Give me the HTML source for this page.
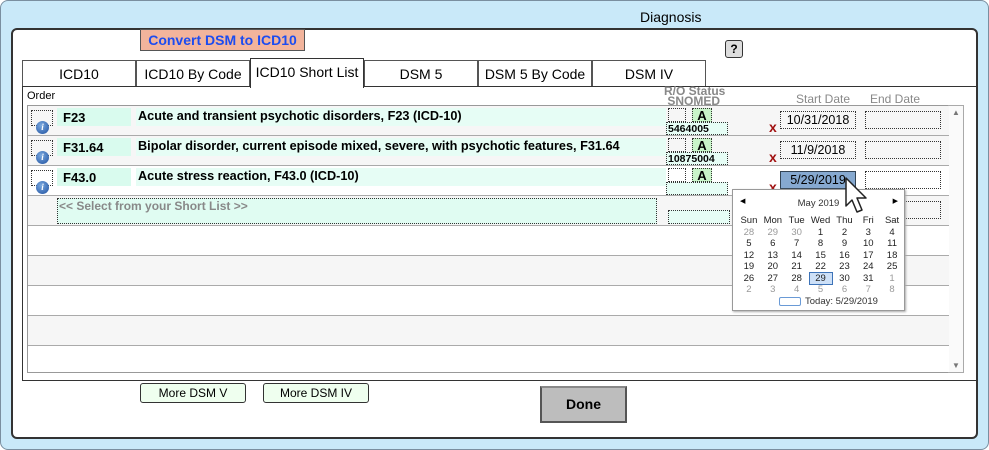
<!DOCTYPE html>
<html><head><meta charset="utf-8"><style>
*{box-sizing:border-box;margin:0;padding:0}
body{width:989px;height:450px;overflow:hidden;background:#fff;font-family:"Liberation Sans",Arial,sans-serif;position:relative}
.a{position:absolute}
.dot{border:1px dotted #333}
.row{position:absolute;left:28px;width:921px;height:30px;border-bottom:1px solid #aaa}
.code{position:absolute;left:29px;top:2px;width:74px;height:18px;background:#d9fbee;font-weight:bold;font-size:13px;padding:2px 6px}
.desc{position:absolute;left:108px;top:2px;width:530px;height:18px;background:#e6fdf5;font-weight:bold;font-size:12.7px;padding:1px 2px;white-space:nowrap}
.ord{position:absolute;left:3px;top:4px;width:22px;height:16px}
.info{position:absolute;left:8px;top:15px;width:13px;height:13px;border-radius:50%;background:radial-gradient(circle at 40% 35%,#7aa9e0,#1d4f9e);color:#fff;font:bold italic 9px "Liberation Serif",serif;text-align:center;line-height:13px}
.ro{position:absolute;left:640px;top:2px;width:18px;height:14px}
.st{position:absolute;left:664px;top:2px;width:20px;height:14px;background:#c9f5c9;font-weight:bold;font-size:13px;text-align:center;line-height:14px}
.sn{position:absolute;left:638px;top:16px;width:62px;height:13px;background:#e6fdf5;font-size:10.5px;font-weight:bold;line-height:12px;padding-left:1px}
.x{position:absolute;left:741px;top:13px;color:#a01010;font-weight:bold;font-size:14px}
.sd{position:absolute;left:752px;top:5px;width:76px;height:18px;font-size:12.5px;text-align:center;line-height:16px}
.ed{position:absolute;left:837px;top:5px;width:76px;height:18px}
.tab{position:absolute;top:60px;height:27px;border:1px solid #555;border-bottom:none;font-size:14px;text-align:center;line-height:27px;background:#fff}
.cal td{width:24px;text-align:center;font-size:9.5px;height:11.5px;line-height:11.5px;color:#222}
.cal .g{color:#999}
</style></head><body>
<div class="a" style="left:0;top:0;width:989px;height:450px;background:#c9e9f9;border:1px solid #7a8fa0;border-radius:8px"></div>
<div class="a" style="left:640px;top:9px;font-size:14px">Diagnosis</div>
<div class="a" style="left:11px;top:28px;width:967px;height:411px;background:#fff;border:2px solid #333;border-radius:6px"></div>
<div class="a" style="left:140px;top:29px;width:165px;height:22px;background:#f2b49c;border:1px solid #555;color:#1c4cf0;font-weight:bold;font-size:14px;text-align:center;line-height:20px">Convert DSM to ICD10</div>
<div class="a" style="left:725px;top:40px;width:18px;height:18px;border:1px solid #333;border-radius:3px;background:#ddd;font-weight:bold;font-size:12px;text-align:center;line-height:16px">?</div>
<div class="tab" style="left:22px;width:114px">ICD10</div>
<div class="tab" style="left:136px;width:114px">ICD10 By Code</div>
<div class="tab" style="left:250px;width:114px;top:58px;height:30px;z-index:2;border-color:#333">ICD10 Short List</div>
<div class="tab" style="left:364px;width:114px">DSM 5</div>
<div class="tab" style="left:478px;width:114px">DSM 5 By Code</div>
<div class="tab" style="left:592px;width:114px">DSM IV</div>
<div class="a" style="left:22px;top:86px;width:955px;height:295px;border-top:1px solid #333;border-left:1px solid #333;border-bottom:1px solid #333"></div>
<div class="a" style="left:27px;top:90px;font-size:11px">Order</div>
<div class="a" style="left:664px;top:86px;font-size:12px;font-weight:bold;color:#888;line-height:10px">R/O&nbsp;Status<br>&nbsp;SNOMED</div>
<div class="a" style="left:796px;top:92px;font-size:12px;color:#888">Start Date</div>
<div class="a" style="left:870px;top:92px;font-size:12px;color:#888">End Date</div>
<div class="a" style="left:27px;top:105px;width:937px;height:268px;border:1px solid #999;background:#fff"></div>
<div class="a" style="left:948px;top:105px;width:16px;height:268px;border:1px solid #aaa;background:#fafafa"><div style="font-size:8px;color:#777;text-align:center;margin-top:2px">▲</div><div style="font-size:8px;color:#777;text-align:center;position:absolute;bottom:2px;width:14px">▼</div></div>

<div class="row" style="top:106px;background:#f6f6f6">
<div class="ord dot"></div><div class="info">i</div><div class="code">F23</div><div class="desc">Acute and transient psychotic disorders, F23 (ICD-10)</div>
<div class="ro dot"></div><div class="st dot">A</div><div class="sn dot">5464005</div><div class="x">x</div><div class="sd dot">10/31/2018</div><div class="ed dot"></div></div>
<div class="row" style="top:136px;background:#f6f6f6">
<div class="ord dot"></div><div class="info">i</div><div class="code">F31.64</div><div class="desc">Bipolar disorder, current episode mixed, severe, with psychotic features, F31.64</div>
<div class="ro dot"></div><div class="st dot">A</div><div class="sn dot">10875004</div><div class="x">x</div><div class="sd dot">11/9/2018</div><div class="ed dot"></div></div>
<div class="row" style="top:166px;background:#fff">
<div class="ord dot"></div><div class="info">i</div><div class="code">F43.0</div><div class="desc">Acute stress reaction, F43.0 (ICD-10)</div>
<div class="ro dot"></div><div class="st dot">A</div><div class="sn dot"></div><div class="x">x</div><div class="sd" style="background:#86a9d0;border:1px solid #345">5/29/2019</div><div class="ed dot"></div></div>
<div class="row" style="top:196px;background:#f6f6f6">
<div class="a dot" style="left:29px;top:2px;width:600px;height:26px;background:#e0fcf2;color:#888;font-weight:bold;font-size:12px;padding-left:1px">&lt;&lt; Select from your Short List &gt;&gt;</div>
<div class="a dot" style="left:640px;top:14px;width:62px;height:14px;background:#e6fdf5"></div><div class="ed dot"></div></div>
<div class="row" style="top:226px;background:#fff"></div>
<div class="row" style="top:256px;background:#f6f6f6"></div>
<div class="row" style="top:286px;background:#fff"></div>
<div class="row" style="top:316px;background:#f6f6f6"></div>
<div class="row" style="top:346px;background:#fff;border-bottom:none;height:26px"></div>

<div class="a" style="left:732px;top:189px;width:173px;height:122px;background:#fff;border:1px solid #999;box-shadow:1px 1px 2px #aaa">
<div class="a" style="left:7px;top:7px;font-size:7px">◀</div><div class="a" style="right:6px;top:7px;font-size:7px">▶</div>
<div class="a" style="left:0;width:171px;top:8px;text-align:center;font-size:9.5px;color:#333">May 2019</div>
<table class="cal a" style="left:4px;top:25px;border-collapse:collapse">
<tr><td>Sun</td><td>Mon</td><td>Tue</td><td>Wed</td><td>Thu</td><td>Fri</td><td>Sat</td></tr>
<tr><td class="g">28</td><td class="g">29</td><td class="g">30</td><td>1</td><td>2</td><td>3</td><td>4</td></tr>
<tr><td>5</td><td>6</td><td>7</td><td>8</td><td>9</td><td>10</td><td>11</td></tr>
<tr><td>12</td><td>13</td><td>14</td><td>15</td><td>16</td><td>17</td><td>18</td></tr>
<tr><td>19</td><td>20</td><td>21</td><td>22</td><td>23</td><td>24</td><td>25</td></tr>
<tr><td>26</td><td>27</td><td>28</td><td><span style="display:inline-block;width:22px;background:#cde0f7;outline:1px solid #3d73b8">29</span></td><td>30</td><td>31</td><td class="g">1</td></tr>
<tr><td class="g">2</td><td class="g">3</td><td class="g">4</td><td class="g">5</td><td class="g">6</td><td class="g">7</td><td class="g">8</td></tr>
</table>
<div class="a" style="left:46px;top:107px;width:22px;height:9px;border:1px solid #6a9ad6;border-radius:2px"></div>
<div class="a" style="left:72px;top:106px;font-size:9.5px;color:#333">Today: 5/29/2019</div>
</div>
<svg class="a" style="left:843px;top:176px" width="30" height="42" viewBox="0 0 30 42"><path d="M3 2 L3 30 L9 24 L14 36 L19 34 L14 22 L23 22 Z" fill="#fff" stroke="#222" stroke-width="1.5" stroke-linejoin="round"/></svg>

<div class="a" style="left:140px;top:383px;width:106px;height:20px;border:1px solid #333;border-radius:3px;background:#efffef;font-size:12px;text-align:center;line-height:18px">More DSM V</div>
<div class="a" style="left:263px;top:383px;width:106px;height:20px;border:1px solid #333;border-radius:3px;background:#efffef;font-size:12px;text-align:center;line-height:18px">More DSM IV</div>
<div class="a" style="left:540px;top:386px;width:87px;height:37px;border:2px solid #555;border-top-color:#888;background:#bdbdbd;font-weight:bold;font-size:14px;text-align:center;line-height:33px">Done</div>
</body></html>
